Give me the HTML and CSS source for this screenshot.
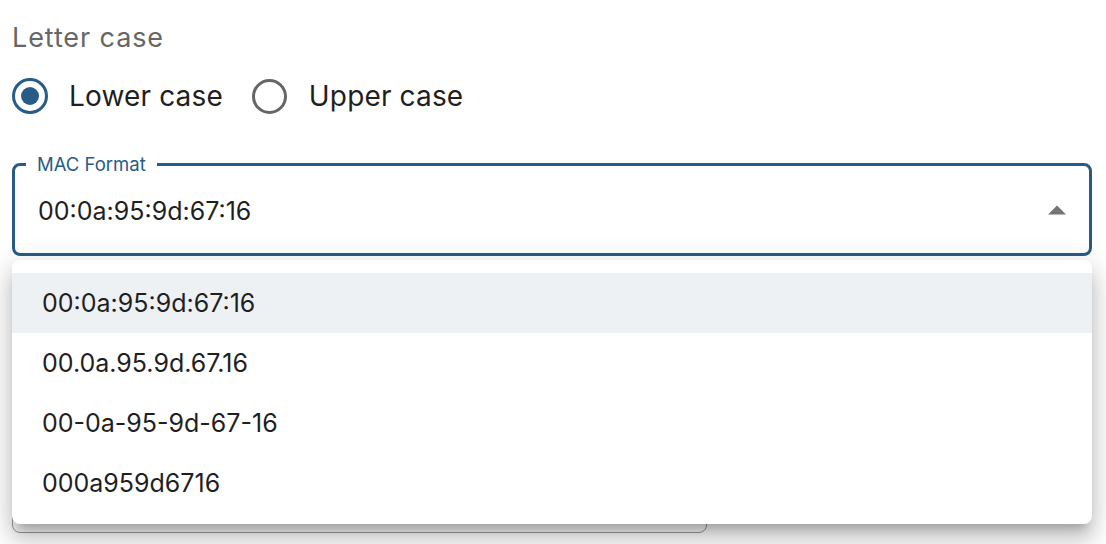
FILE: index.html
```html
<!DOCTYPE html>
<html>
<head>
<meta charset="utf-8">
<link rel="stylesheet" href="styles.css">
</head>
<body>
<div class="page">
  <div class="group-label">Letter case</div>
  <div class="radios">
    <label class="radio checked"><span class="circle"><span class="dot"></span></span><span class="radio-text">Lower case</span></label>
    <label class="radio"><span class="circle"></span><span class="radio-text">Upper case</span></label>
  </div>
  <div class="select-wrap">
    <div class="select">
      <span class="select-label">MAC Format</span>
      <span class="select-value">00:0a:95:9d:67:16</span>
      <svg class="arrow" width="18" height="10" viewBox="0 0 18 10"><path d="M0 9.5 L9 0.5 L18 9.5 Z" fill="#757575"/></svg>
    </div>
    <ul class="menu">
      <li class="item active">00:0a:95:9d:67:16</li>
      <li class="item">00.0a.95.9d.67.16</li>
      <li class="item">00-0a-95-9d-67-16</li>
      <li class="item">000a959d6716</li>
    </ul>
  </div>
  <div class="next-field"></div>
</div>
</body>
</html>
```

FILE: styles.css
```css
html, body {
  margin: 0;
  padding: 0;
  background: #ffffff;
}
body {
  font-family: "Inter", "Liberation Sans", sans-serif;
  color: rgba(0, 0, 0, 0.87);
}
.page {
  padding: 22px 14px 12px 12px;
  width: 1080px;
}
.group-label {
  font-size: 27px;
  line-height: 32px;
  letter-spacing: 0.9px;
  color: #666666;
}
.radios {
  display: flex;
  align-items: center;
  margin-top: 22px;
  height: 40px;
}
.radio {
  display: flex;
  align-items: center;
  margin-right: 29px;
}
.circle {
  box-sizing: border-box;
  width: 36px;
  height: 36px;
  border-radius: 50%;
  border: 3.5px solid #666666;
  display: flex;
  align-items: center;
  justify-content: center;
  margin-right: 21px;
}
.radio:nth-child(2) .circle {
  width: 35px;
  height: 35px;
  border-width: 3.2px;
  margin-right: 22px;
}
.radio.checked .circle {
  border-color: #285b86;
}
.dot {
  width: 18px;
  height: 18px;
  border-radius: 50%;
  background: #285b86;
}
.radio-text {
  font-size: 28px;
  line-height: 36px;
  letter-spacing: 0.15px;
  color: #1f1f1f;
}
.select-wrap {
  position: relative;
  margin-top: 47px;
}
.select {
  position: relative;
  box-sizing: border-box;
  height: 93px;
  border: 3px solid #285b86;
  border-radius: 8px;
  display: flex;
  align-items: center;
  padding: 0 23px;
}
.select-label {
  position: absolute;
  left: 11px;
  top: -14px;
  padding: 0 11px;
  background: #ffffff;
  color: #285b86;
  font-size: 18.5px;
  line-height: 24px;
}
.select-value {
  flex: 1;
  font-size: 25px;
  line-height: 30px;
  color: #1f1f1f;
  padding-top: 2px;
}
.arrow {
  margin-right: 0;
  margin-top: 1px;
}
.menu {
  position: absolute;
  left: 0;
  right: 0;
  top: 97px;
  margin: 0;
  padding: 13px 0 11px;
  list-style: none;
  background: #ffffff;
  border-radius: 8px;
  z-index: 2;
  box-shadow: 0 10px 10px -6px rgba(0, 0, 0, 0.2), 0 16px 20px 2px rgba(0, 0, 0, 0.14), 0 6px 28px 4px rgba(0, 0, 0, 0.12);
}
.item {
  height: 60px;
  display: flex;
  align-items: center;
  padding: 0 30px;
  font-size: 25px;
  color: #1f1f1f;
}
.item.active {
  background: #eef1f4;
}
.next-field {
  margin-top: 205px;
  width: 695px;
  height: 72px;
  box-sizing: border-box;
  border: 1.5px solid #9a9a9a;
  border-radius: 8px;
}
```
